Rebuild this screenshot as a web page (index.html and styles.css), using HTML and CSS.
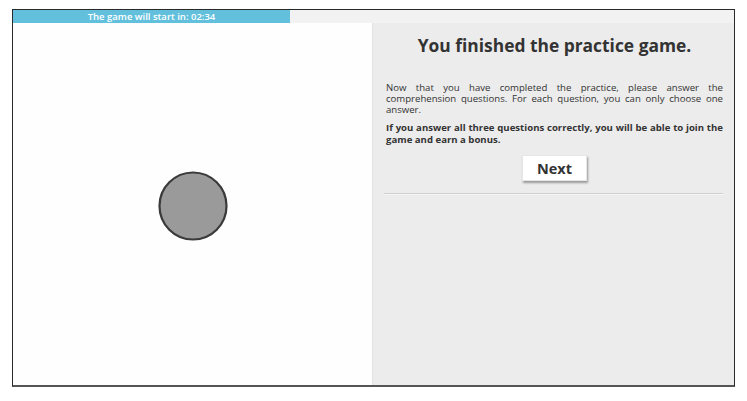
FILE: index.html
```html
<!DOCTYPE html>
<html>
<head>
<meta charset="utf-8">
<link rel="stylesheet" href="styles.css">
</head>
<body>
<div class="frame">
  <div class="timer">
    <div class="timer-fill">The game will start in: 02:34</div>
  </div>
  <div class="main">
    <div class="canvas">
      <svg class="ball" width="72" height="72" viewBox="0 0 72 72">
        <circle cx="36" cy="36" r="33.5" fill="#9a9a9a" stroke="#3a3a3a" stroke-width="2.2"/>
      </svg>
    </div>
    <div class="panel">
      <h1 class="title">You finished the practice game.</h1>
      <p class="body">Now that you have completed the practice, please answer the comprehension questions. For each question, you can only choose one answer.</p>
      <p class="body strong">If you answer all three questions correctly, you will be able to join the game and earn a bonus.</p>
      <div class="actions"><button class="next">Next</button></div>
      <hr class="rule">
    </div>
  </div>
</div>
</body>
</html>
```
FILE: styles.css
```css
html, body {
  margin: 0;
  padding: 0;
  background: #ffffff;
}
body {
  font-family: "Open Sans", "Liberation Sans", sans-serif;
  color: #333333;
}
.frame {
  margin: 9px 0 0 12px;
  width: 721px;
  height: 375px;
  border: 1px solid #2a2a2a;
  border-bottom: 2px solid #555555;
  display: flex;
  flex-direction: column;
}
.timer {
  height: 13px;
  background: #f2f2f2;
  display: flex;
}
.timer-fill {
  width: 277px;
  background: #62c0dc;
  color: #ffffff;
  font-size: 9.5px;
  font-weight: 600;
  line-height: 13px;
  text-align: center;
  white-space: nowrap;
}
.main {
  flex: 1;
  display: flex;
}
.canvas {
  width: 359px;
  background: #fefefe;
  display: flex;
  align-items: center;
  justify-content: center;
  padding-top: 4px;
}
.ball {
  display: block;
}
.panel {
  flex: 1;
  background: #ececec;
  border-left: 1px solid #e2e2e2;
  padding: 0 11px 0 13px;
}
.title {
  font-size: 17.4px;
  font-weight: 700;
  text-align: center;
  margin: 11px 0 0;
  line-height: 22px;
}
.body {
  font-size: 9.6px;
  line-height: 11px;
  text-align: justify;
  margin: 26px 0 0;
}
.strong {
  font-weight: 700;
  margin-top: 7px;
  line-height: 12px;
}
.actions {
  display: flex;
  justify-content: center;
  margin-top: 9px;
}
.next {
  font-family: "Open Sans", "Liberation Sans", sans-serif;
  font-size: 14.5px;
  font-weight: 700;
  color: #333333;
  background: #ffffff;
  border: 1px solid #e6e6e6;
  width: 65px;
  height: 26px;
  padding: 0;
  box-shadow: 1px 2px 2px rgba(0,0,0,0.35);
}
.rule {
  margin: 12px 0 0 -2px;
  border: 0;
  height: 1px;
  background: #cfcfcf;
  box-shadow: 0 1px 0 #f6f6f6;
}
```
